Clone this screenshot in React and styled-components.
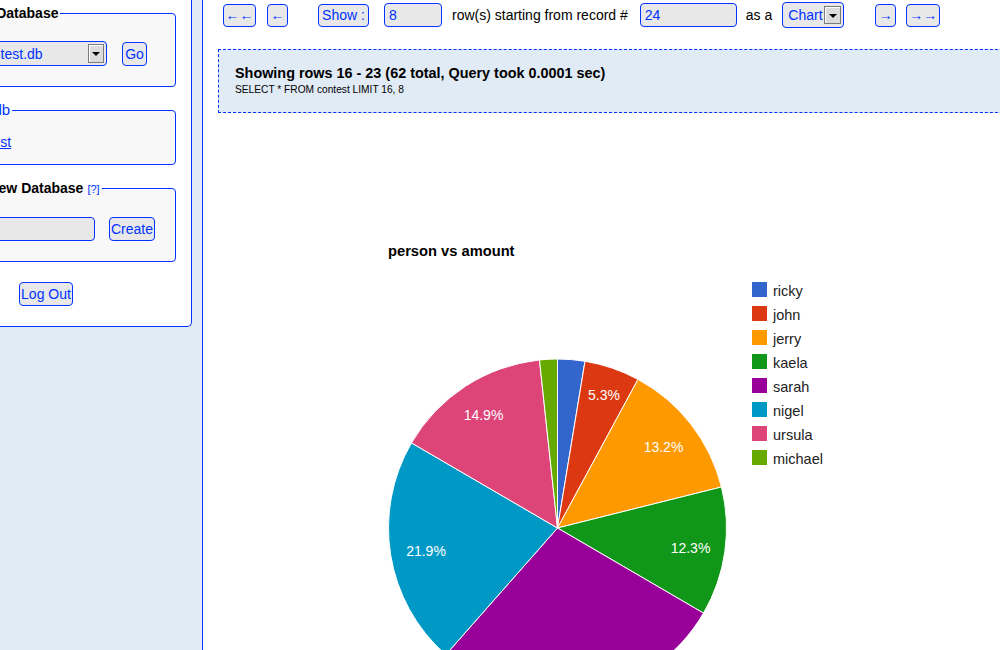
import styled, { createGlobalStyle } from "styled-components";

const BLUE = "#0033ff";

const GlobalStyle = createGlobalStyle`
  html, body { margin: 0; padding: 0; }
  body {
    font-family: "Liberation Sans", Arial, sans-serif;
    font-size: 14px;
    background: #fff;
    width: 1000px;
    height: 650px;
    overflow: hidden;
  }
`;

const Page = styled.div`
  display: flex;
  width: 1000px;
  height: 650px;
  overflow: hidden;
`;

const Sidebar = styled.div`
  flex: 0 0 202px;
  background: #e0ebf6;
  border-right: 1px solid ${BLUE};
  overflow: hidden;
`;

const Panel = styled.div`
  box-sizing: border-box;
  width: 272px;
  margin-left: -80px;
  padding: 5px 15px 20px;
  background: #fff;
  border: 1px solid ${BLUE};
  border-top: none;
  border-radius: 0 0 5px 5px;
`;

const Fieldset = styled.fieldset`
  margin: 0 0 15px;
  padding: ${(p) => p.$pt}px ${(p) => p.$pr}px ${(p) => p.$pb}px 2px;
  border: 1px solid ${BLUE};
  border-radius: 4px;
  background: #f8f8f8;
  min-width: 0;
`;

const Legend = styled.legend`
  padding: 0 2px;
  font-size: 14px;
  line-height: 16px;
  font-weight: bold;
  color: #000;
`;

const LegendLink = styled.a`
  font-size: 15px;
  font-weight: normal;
  color: ${BLUE};
  text-decoration: none;
`;

const Help = styled.a`
  font-size: 11px;
  font-weight: normal;
  color: ${BLUE};
  text-decoration: none;
  margin-left: 4px;
`;

const FieldRow = styled.div`
  display: flex;
  justify-content: flex-end;
  align-items: center;
  gap: ${(p) => p.$gap}px;
`;

const TableLink = styled.a`
  display: block;
  margin-left: 27px;
  line-height: 16px;
  color: ${BLUE};
  text-decoration: underline;
`;

const LogoutRow = styled.div`
  display: flex;
  justify-content: flex-end;
  padding: 5px 103px 0 0;
`;

const Button = styled.button`
  box-sizing: border-box;
  width: ${(p) => p.$w}px;
  height: ${(p) => p.$h || 24}px;
  margin-left: ${(p) => p.$ml || 0}px;
  padding: 0;
  flex: none;
  font-family: "Liberation Sans", Arial, sans-serif;
  font-size: 14px;
  color: ${BLUE};
  background: #e8e8e8;
  border: 1px solid ${BLUE};
  border-radius: 4px;
`;

const Input = styled.div`
  box-sizing: border-box;
  width: ${(p) => p.$w}px;
  height: 24px;
  margin-left: ${(p) => p.$ml || 0}px;
  padding: 0 4px;
  flex: none;
  display: flex;
  align-items: center;
  color: ${BLUE};
  background: #e8e8e8;
  border: 1px solid ${BLUE};
  border-radius: 4px;
`;

const Select = styled.div`
  box-sizing: border-box;
  width: ${(p) => p.$w}px;
  height: ${(p) => p.$h}px;
  margin-left: ${(p) => p.$ml || 0}px;
  padding: 0 2px 0 ${(p) => p.$pl}px;
  flex: none;
  display: flex;
  align-items: center;
  justify-content: space-between;
  color: ${BLUE};
  background: #e8e8e8;
  border: 1px solid ${BLUE};
  border-radius: 4px;
  white-space: nowrap;
`;

const Arrow = styled.span`
  box-sizing: border-box;
  width: ${(p) => p.$w}px;
  height: ${(p) => p.$h}px;
  flex: none;
  display: flex;
  align-items: center;
  justify-content: center;
  background: #dcdcdc;
  border: 1px solid #7a7a7a;
  box-shadow: inset 1px 1px #fff;
  &::after {
    content: "";
    border-left: 4px solid transparent;
    border-right: 4px solid transparent;
    border-top: 4px solid #000;
    margin-top: 1px;
  }
`;

const Main = styled.div`
  flex: 1;
  min-width: 0;
  padding-left: 15px;
  overflow: hidden;
`;

const NavRow = styled.div`
  display: flex;
  align-items: center;
  height: 26px;
  margin: 2px 0 0 5px;
  white-space: nowrap;
`;

const Label = styled.span`
  margin-left: ${(p) => p.$ml}px;
  color: #000;
  flex: none;
`;

const InfoBox = styled.div`
  box-sizing: border-box;
  width: 820px;
  height: 64px;
  margin-top: 21px;
  padding: 15px 16px 0;
  background: #e0ebf6;
  border: 1px dashed ${BLUE};
`;

const InfoTitle = styled.div`
  font-size: 14.4px;
  line-height: 16px;
  font-weight: bold;
  color: #000;
`;

const InfoQuery = styled.div`
  margin-top: 3px;
  font-size: 10.2px;
  line-height: 12px;
  color: #000;
`;

const ChartSvg = styled.svg`
  display: block;
  font-family: "Liberation Sans", Arial, sans-serif;
`;

const slices = [
  { name: "ricky", pct: 2.6, color: "#3366cc" },
  { name: "john", pct: 5.3, color: "#dc3912", label: [604, 400] },
  { name: "jerry", pct: 13.2, color: "#ff9900", label: [663.5, 452] },
  { name: "kaela", pct: 12.3, color: "#109618", label: [690.5, 553] },
  { name: "sarah", pct: 28.1, color: "#990099", label: [578, 666] },
  { name: "nigel", pct: 21.9, color: "#0099c6", label: [426, 556] },
  { name: "ursula", pct: 14.9, color: "#dd4477", label: [483.5, 420] },
  { name: "michael", pct: 1.7, color: "#66aa00" },
];

const CX = 557.5;
const CY = 528;
const R = 169;

const pt = (frac) => {
  const a = frac * 2 * Math.PI;
  return [CX + R * Math.sin(a), CY - R * Math.cos(a)];
};

function PieChart() {
  let acc = 0;
  const parts = slices.map((s) => {
    const start = acc / 100;
    acc += s.pct;
    const end = acc / 100;
    const [x1, y1] = pt(start);
    const [x2, y2] = pt(end);
    const large = end - start > 0.5 ? 1 : 0;
    const d = `M${CX},${CY} L${x1},${y1} A${R},${R} 0 ${large} 1 ${x2},${y2} Z`;
    return { ...s, d };
  });

  return (
    <ChartSvg width="782" height="537" viewBox="218 113 782 537">
      <text x="388" y="256" fontSize="14.7" fontWeight="bold" fill="#000">
        person vs amount
      </text>
      {parts.map((p) => (
        <path key={p.name} d={p.d} fill={p.color} stroke="#fff" strokeWidth="1" />
      ))}
      {parts
        .filter((p) => p.label)
        .map((p) => (
          <text
            key={p.name + "-l"}
            x={p.label[0]}
            y={p.label[1]}
            fontSize="14"
            fill="#fff"
            textAnchor="middle"
          >
            {p.pct.toFixed(1)}%
          </text>
        ))}
      {slices.map((s, i) => (
        <g key={s.name + "-k"}>
          <rect x="752" y={282 + i * 24} width="15" height="15" fill={s.color} />
          <text x="773" y={296 + i * 24} fontSize="14.5" fill="#222">
            {s.name}
          </text>
        </g>
      ))}
    </ChartSvg>
  );
}

export default function App() {
  return (
    <Page>
      <GlobalStyle />
      <Sidebar>
        <Panel>
          <Fieldset $pt={20} $pr={28} $pb={20}>
            <Legend>Change Database</Legend>
            <FieldRow $gap={15}>
              <Select $w={134} $h={25} $pl={4}>
                contest.db
                <Arrow $w={16} $h={19} />
              </Select>
              <Button $w={25}>Go</Button>
            </FieldRow>
          </Fieldset>

          <Fieldset $pt={16} $pr={28} $pb={14}>
            <Legend>
              <LegendLink href="#">contest.db</LegendLink>
            </Legend>
            <TableLink href="#">contest</TableLink>
          </Fieldset>

          <Fieldset $pt={20} $pr={20} $pb={20}>
            <Legend>
              Create New Database<Help href="#">[?]</Help>
            </Legend>
            <FieldRow $gap={14}>
              <Input $w={150} />
              <Button $w={46}>Create</Button>
            </FieldRow>
          </Fieldset>

          <LogoutRow>
            <Button $w={54}>Log Out</Button>
          </LogoutRow>
        </Panel>
      </Sidebar>

      <Main>
        <NavRow>
          <Button $w={33} $h={23}>←←</Button>
          <Button $w={21} $h={23} $ml={11}>←</Button>
          <Button $w={51} $h={23} $ml={30}>Show :</Button>
          <Input $w={58} $ml={15}>8</Input>
          <Label $ml={10}>row(s) starting from record #</Label>
          <Input $w={97} $ml={12}>24</Input>
          <Label $ml={9}>as a</Label>
          <Select $w={62} $h={26} $ml={10} $pl={5}>
            Chart
            <Arrow $w={17} $h={18} />
          </Select>
          <Button $w={21} $h={23} $ml={31}>→</Button>
          <Button $w={34} $h={23} $ml={10}>→→</Button>
        </NavRow>

        <InfoBox>
          <InfoTitle>Showing rows 16 - 23 (62 total, Query took 0.0001 sec)</InfoTitle>
          <InfoQuery>SELECT * FROM contest LIMIT 16, 8</InfoQuery>
        </InfoBox>

        <PieChart />
      </Main>
    </Page>
  );
}
